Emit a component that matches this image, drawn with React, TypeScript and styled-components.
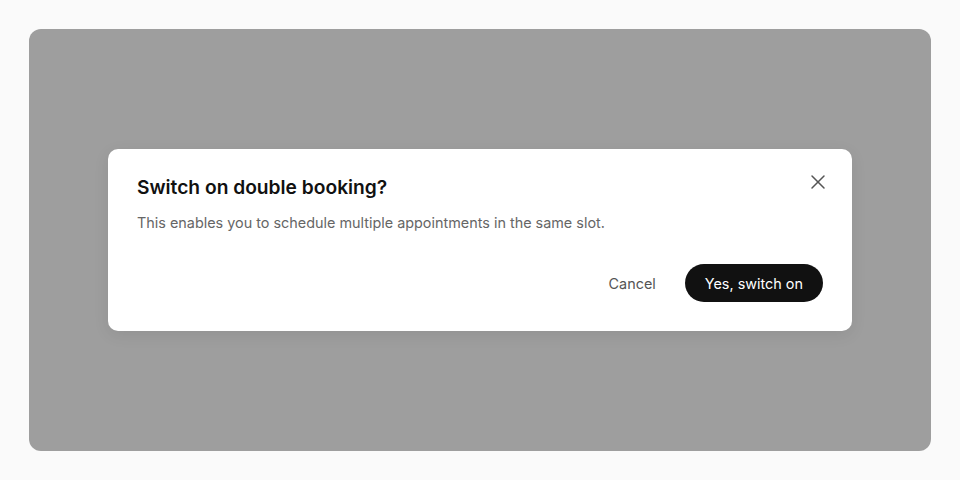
import styled, { createGlobalStyle } from 'styled-components';
import { X } from 'lucide-react';

const GlobalStyle = createGlobalStyle`
  html, body {
    margin: 0;
    padding: 0;
    background: #fafafa;
    font-family: Inter, 'Noto Sans', sans-serif;
  }
`;

const Page = styled.div`
  width: 960px;
  height: 480px;
  box-sizing: border-box;
  padding: 29px;
  background: #fafafa;
`;

const Backdrop = styled.div`
  height: 100%;
  border-radius: 12px;
  background: #9e9e9e;
  display: flex;
  justify-content: center;
  align-items: flex-start;
  padding-top: 120px;
  box-sizing: border-box;
`;

const Dialog = styled.div`
  position: relative;
  width: 744px;
  box-sizing: border-box;
  padding: 24px 29px 29px 29px;
  background: #fff;
  border-radius: 10px;
  box-shadow: 0 4px 16px rgba(0, 0, 0, 0.08);
`;

const Title = styled.h2`
  margin: 0;
  font-size: 19.2px;
  line-height: 28px;
  font-weight: 600;
  color: #111;
`;

const Description = styled.p`
  margin: 11px 0 0;
  font-size: 14.4px;
  line-height: 22px;
  color: #666;
`;

const Actions = styled.div`
  margin-top: 30px;
  display: flex;
  justify-content: flex-end;
  align-items: center;
  gap: 15px;
`;

const Button = styled.button<{ $primary?: boolean }>`
  height: 38px;
  border: none;
  border-radius: 19px;
  padding: ${({ $primary }) => ($primary ? '0 20px' : '0 14px')};
  background: ${({ $primary }) => ($primary ? '#111' : 'transparent')};
  color: ${({ $primary }) => ($primary ? '#fff' : '#555')};
  font-family: inherit;
  font-size: 14.4px;
  cursor: pointer;
`;

const CloseButton = styled.button`
  position: absolute;
  top: 21px;
  right: 22px;
  width: 24px;
  height: 24px;
  padding: 0;
  border: none;
  background: transparent;
  color: #555;
  display: flex;
  align-items: center;
  justify-content: center;
  cursor: pointer;
`;

const App = () => {
  return (
    <>
      <GlobalStyle />
      <Page>
        <Backdrop>
          <Dialog role='dialog'>
            <CloseButton aria-label='Close'>
              <X size={24} strokeWidth={1.5} />
            </CloseButton>
            <Title>Switch on double booking?</Title>
            <Description>
              This enables you to schedule multiple appointments in the same slot.
            </Description>
            <Actions>
              <Button>Cancel</Button>
              <Button $primary>Yes, switch on</Button>
            </Actions>
          </Dialog>
        </Backdrop>
      </Page>
    </>
  );
};

export default App;
